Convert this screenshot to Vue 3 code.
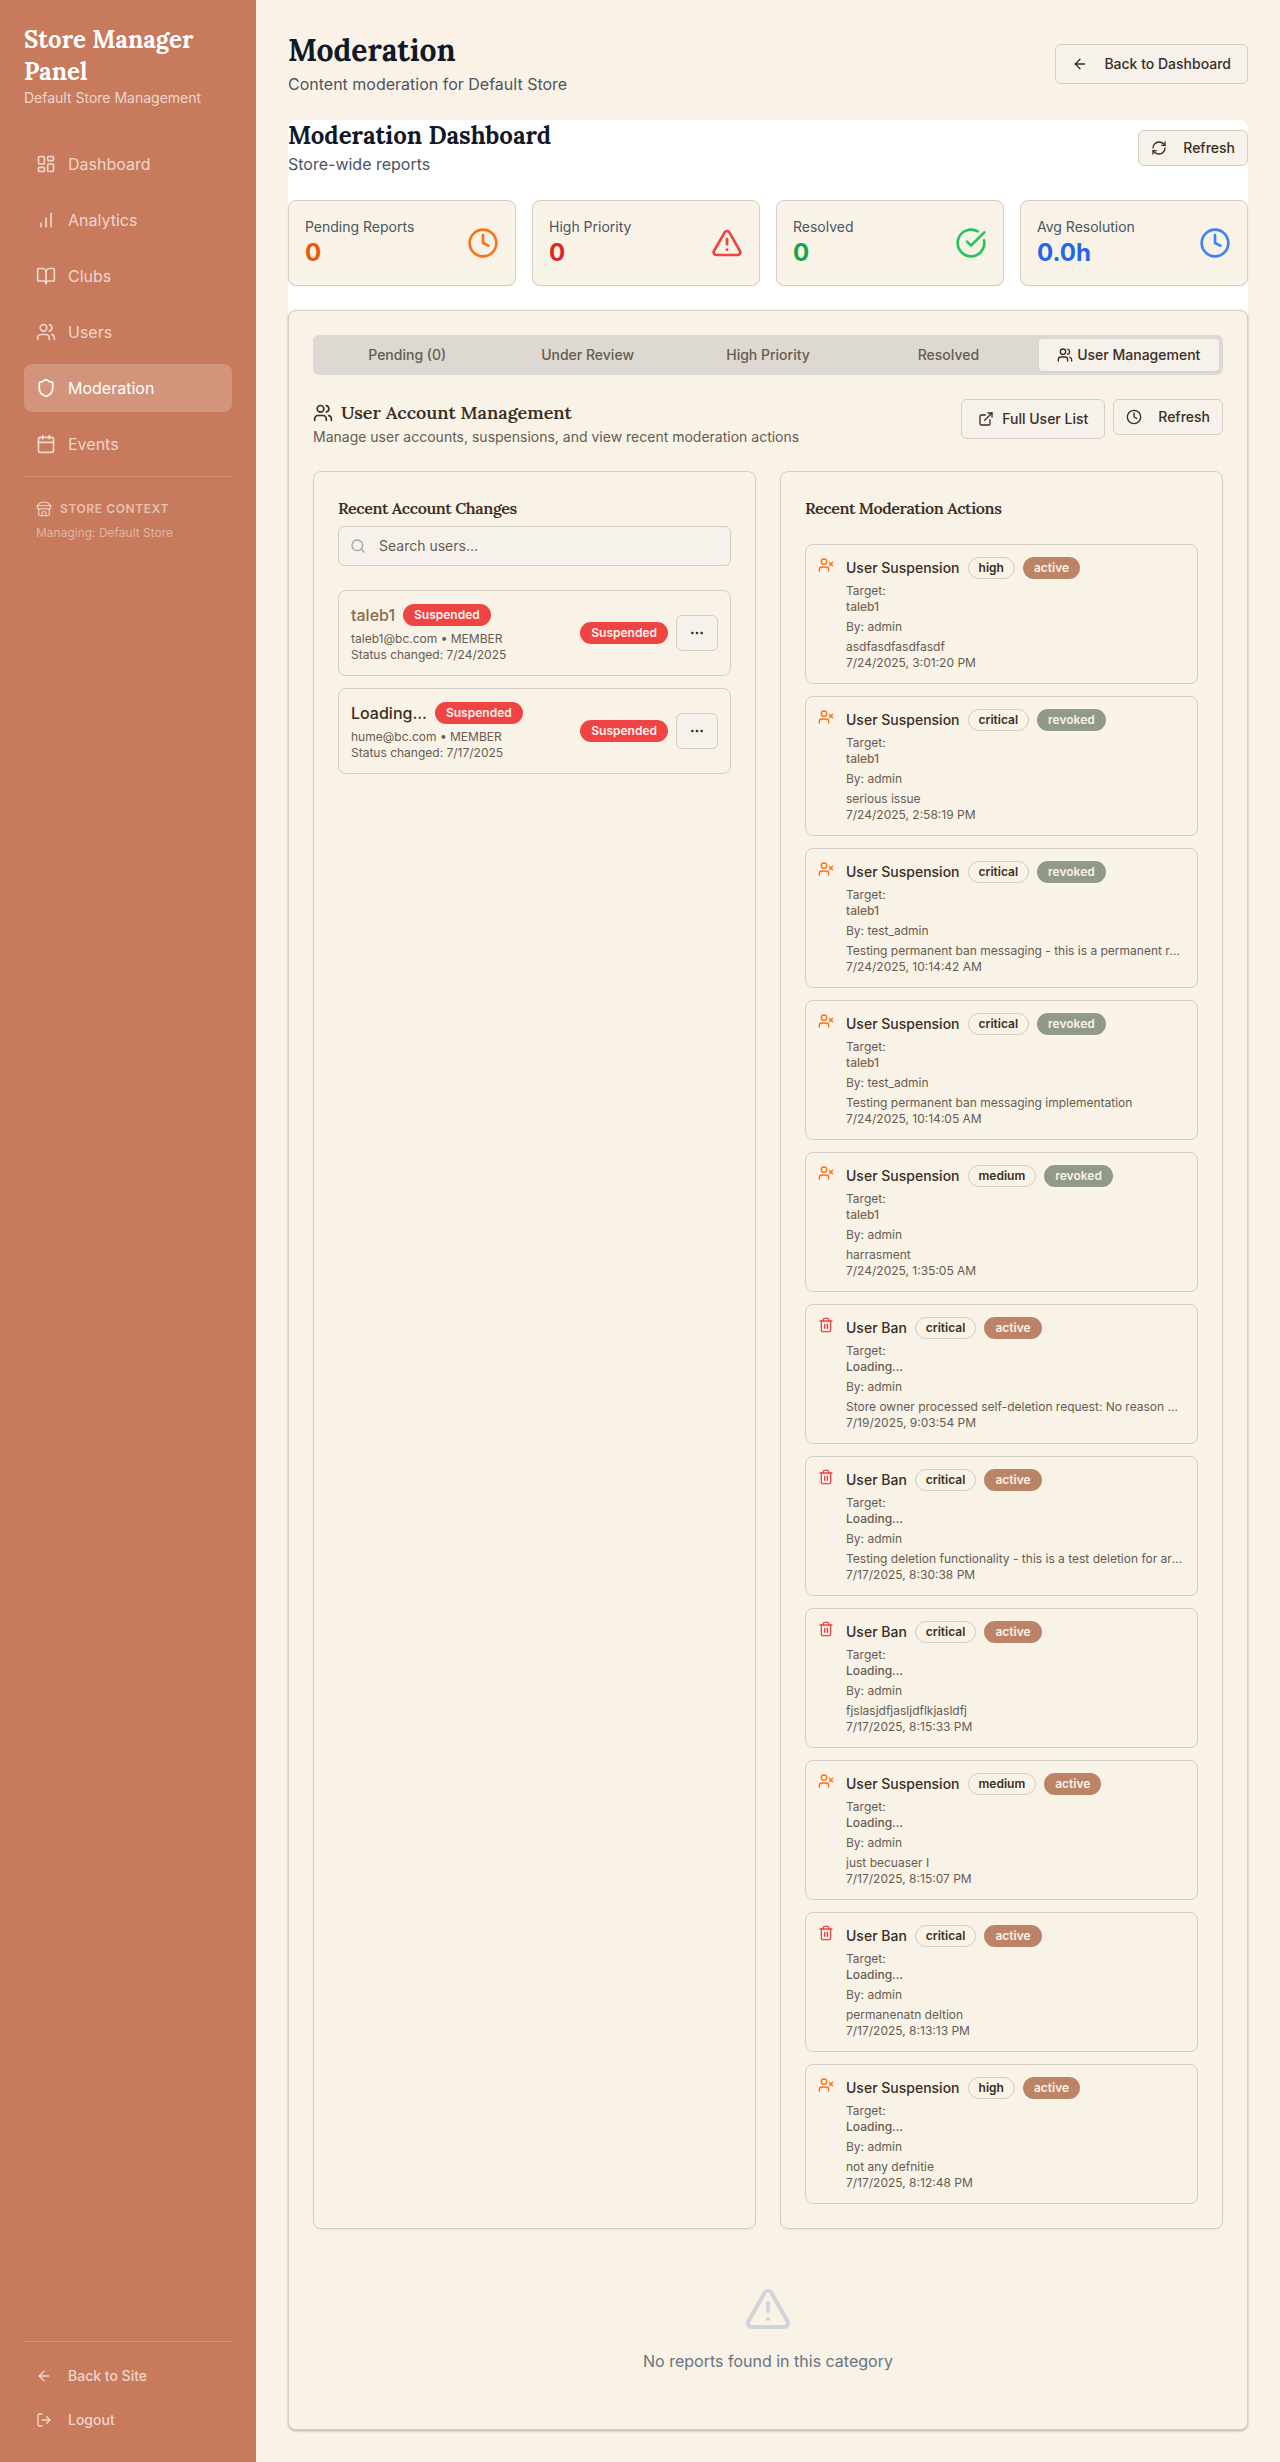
<script setup>
import { h } from 'vue'

const icons = {
  dashboard: '<rect width="7" height="9" x="3" y="3" rx="1"/><rect width="7" height="5" x="14" y="3" rx="1"/><rect width="7" height="9" x="14" y="12" rx="1"/><rect width="7" height="5" x="3" y="16" rx="1"/>',
  bars: '<path d="M12 20V10"/><path d="M18 20V4"/><path d="M6 20v-4"/>',
  book: '<path d="M12 7v14"/><path d="M3 18a1 1 0 0 1-1-1V4a1 1 0 0 1 1-1h5a4 4 0 0 1 4 4 4 4 0 0 1 4-4h5a1 1 0 0 1 1 1v13a1 1 0 0 1-1 1h-6a3 3 0 0 0-3 3 3 3 0 0 0-3-3z"/>',
  users: '<path d="M16 21v-2a4 4 0 0 0-4-4H6a4 4 0 0 0-4 4v2"/><circle cx="9" cy="7" r="4"/><path d="M22 21v-2a4 4 0 0 0-3-3.87"/><path d="M16 3.13a4 4 0 0 1 0 7.75"/>',
  shield: '<path d="M20 13c0 5-3.5 7.5-7.66 8.95a1 1 0 0 1-.67-.01C7.5 20.5 4 18 4 13V6a1 1 0 0 1 1-1c2 0 4.5-1.2 6.24-2.72a1.17 1.17 0 0 1 1.52 0C14.51 3.81 17 5 19 5a1 1 0 0 1 1 1z"/>',
  calendar: '<path d="M8 2v4"/><path d="M16 2v4"/><rect width="18" height="18" x="3" y="4" rx="2"/><path d="M3 10h18"/>',
  store: '<path d="m2 7 4.41-4.41A2 2 0 0 1 7.83 2h8.34a2 2 0 0 1 1.42.59L22 7"/><path d="M4 12v8a2 2 0 0 0 2 2h12a2 2 0 0 0 2-2v-8"/><path d="M15 22v-4a2 2 0 0 0-2-2h-2a2 2 0 0 0-2 2v4"/><path d="M2 7h20"/><path d="M22 7v3a2 2 0 0 1-2 2a2.7 2.7 0 0 1-1.59-.63.7.7 0 0 0-.82 0A2.7 2.7 0 0 1 16 12a2.7 2.7 0 0 1-1.59-.63.7.7 0 0 0-.82 0A2.7 2.7 0 0 1 12 12a2.7 2.7 0 0 1-1.59-.63.7.7 0 0 0-.82 0A2.7 2.7 0 0 1 8 12a2.7 2.7 0 0 1-1.59-.63.7.7 0 0 0-.82 0A2.7 2.7 0 0 1 4 12a2 2 0 0 1-2-2V7"/>',
  back: '<path d="m12 19-7-7 7-7"/><path d="M19 12H5"/>',
  logout: '<path d="M9 21H5a2 2 0 0 1-2-2V5a2 2 0 0 1 2-2h4"/><path d="m16 17 5-5-5-5"/><path d="M21 12H9"/>',
  refresh: '<path d="M3 12a9 9 0 0 1 9-9 9.75 9.75 0 0 1 6.74 2.74L21 8"/><path d="M21 3v5h-5"/><path d="M21 12a9 9 0 0 1-9 9 9.75 9.75 0 0 1-6.74-2.74L3 16"/><path d="M8 16H3v5"/>',
  clock: '<circle cx="12" cy="12" r="10"/><path d="M12 6v6l4 2"/>',
  alert: '<path d="m21.73 18-8-14a2 2 0 0 0-3.48 0l-8 14A2 2 0 0 0 4 21h16a2 2 0 0 0 1.73-3"/><path d="M12 9v4"/><path d="M12 17h.01"/>',
  check: '<path d="M21.801 10A10 10 0 1 1 17 3.335"/><path d="m9 11 3 3L22 4"/>',
  external: '<path d="M15 3h6v6"/><path d="M10 14 21 3"/><path d="M18 13v6a2 2 0 0 1-2 2H5a2 2 0 0 1-2-2V8a2 2 0 0 1 2-2h6"/>',
  search: '<circle cx="11" cy="11" r="8"/><path d="m21 21-4.3-4.3"/>',
  more: '<circle cx="12" cy="12" r="1"/><circle cx="19" cy="12" r="1"/><circle cx="5" cy="12" r="1"/>',
  userx: '<path d="M16 21v-2a4 4 0 0 0-4-4H6a4 4 0 0 0-4 4v2"/><circle cx="9" cy="7" r="4"/><path d="m17 8 5 5"/><path d="m22 8-5 5"/>',
  trash: '<path d="M3 6h18"/><path d="M19 6v14c0 1-1 2-2 2H7c-1 0-2-1-2-2V6"/><path d="M8 6V4c0-1 1-2 2-2h4c1 0 2 1 2 2v2"/><path d="M10 11v6"/><path d="M14 11v6"/>',
}

const Icon = ({ name, size = 16 }) =>
  h('svg', {
    width: size, height: size, viewBox: '0 0 24 24', fill: 'none', stroke: 'currentColor',
    'stroke-width': 2, 'stroke-linecap': 'round', 'stroke-linejoin': 'round',
    style: { display: 'block', flexShrink: 0 }, innerHTML: icons[name],
  })
Icon.props = ['name', 'size']

const nav = [
  { label: 'Dashboard', icon: 'dashboard' },
  { label: 'Analytics', icon: 'bars' },
  { label: 'Clubs', icon: 'book' },
  { label: 'Users', icon: 'users' },
  { label: 'Moderation', icon: 'shield', active: true },
  { label: 'Events', icon: 'calendar' },
]

const stats = [
  { label: 'Pending Reports', value: '0', icon: 'clock', tone: 'orange' },
  { label: 'High Priority', value: '0', icon: 'alert', tone: 'red' },
  { label: 'Resolved', value: '0', icon: 'check', tone: 'green' },
  { label: 'Avg Resolution', value: '0.0h', icon: 'clock', tone: 'blue' },
]

const tabs = ['Pending (0)', 'Under Review', 'High Priority', 'Resolved']

const accounts = [
  { name: 'taleb1', email: 'taleb1@bc.com', date: '7/24/2025', known: true },
  { name: 'Loading...', email: 'hume@bc.com', date: '7/17/2025', known: false },
]

const action = (kind, level, state, target, by, reason, time) => ({ kind, level, state, target, by, reason, time })
const actions = [
  action('Suspension', 'high', 'active', 'taleb1', 'admin', 'asdfasdfasdfasdf', '7/24/2025, 3:01:20 PM'),
  action('Suspension', 'critical', 'revoked', 'taleb1', 'admin', 'serious issue', '7/24/2025, 2:58:19 PM'),
  action('Suspension', 'critical', 'revoked', 'taleb1', 'test_admin', 'Testing permanent ban messaging - this is a permanent restriction', '7/24/2025, 10:14:42 AM'),
  action('Suspension', 'critical', 'revoked', 'taleb1', 'test_admin', 'Testing permanent ban messaging implementation', '7/24/2025, 10:14:05 AM'),
  action('Suspension', 'medium', 'revoked', 'taleb1', 'admin', 'harrasment', '7/24/2025, 1:35:05 AM'),
  action('Ban', 'critical', 'active', 'Loading...', 'admin', 'Store owner processed self-deletion request: No reason provided', '7/19/2025, 9:03:54 PM'),
  action('Ban', 'critical', 'active', 'Loading...', 'admin', 'Testing deletion functionality - this is a test deletion for archival', '7/17/2025, 8:30:38 PM'),
  action('Ban', 'critical', 'active', 'Loading...', 'admin', 'fjslasjdfjasljdflkjasldfj', '7/17/2025, 8:15:33 PM'),
  action('Suspension', 'medium', 'active', 'Loading...', 'admin', 'just becuaser I', '7/17/2025, 8:15:07 PM'),
  action('Ban', 'critical', 'active', 'Loading...', 'admin', 'permanenatn deltion', '7/17/2025, 8:13:13 PM'),
  action('Suspension', 'high', 'active', 'Loading...', 'admin', 'not any defnitie', '7/17/2025, 8:12:48 PM'),
]
</script>

<template>
  <div class="layout">
    <aside class="sidebar">
      <h2 class="brand">Store Manager Panel</h2>
      <p class="brand-sub">Default Store Management</p>
      <nav class="nav">
        <a v-for="n in nav" :key="n.label" class="nav-item" :class="{ on: n.active }">
          <Icon :name="n.icon" :size="20" />{{ n.label }}
        </a>
      </nav>
      <div class="context">
        <div class="context-title"><Icon name="store" />STORE CONTEXT</div>
        <div class="context-sub">Managing: Default Store</div>
      </div>
      <div class="side-foot">
        <a class="foot-item"><Icon name="back" />Back to Site</a>
        <a class="foot-item"><Icon name="logout" />Logout</a>
      </div>
    </aside>

    <main class="main">
      <header class="page-head">
        <div>
          <h1 class="page-title">Moderation</h1>
          <p class="page-sub">Content moderation for Default Store</p>
        </div>
        <button class="btn wide"><Icon name="back" />Back to Dashboard</button>
      </header>

      <section class="panel">
        <div class="panel-head">
          <div>
            <h2 class="panel-title">Moderation Dashboard</h2>
            <p class="panel-sub">Store-wide reports</p>
          </div>
          <button class="btn small"><Icon name="refresh" />Refresh</button>
        </div>

        <div class="stats">
          <div v-for="s in stats" :key="s.label" class="stat" :class="s.tone">
            <div>
              <div class="stat-label">{{ s.label }}</div>
              <div class="stat-value">{{ s.value }}</div>
            </div>
            <Icon class="stat-icon" :name="s.icon" :size="32" />
          </div>
        </div>

        <div class="board">
          <div class="tabs">
            <div v-for="t in tabs" :key="t" class="tab">{{ t }}</div>
            <div class="tab on"><Icon name="users" />User Management</div>
          </div>

          <div class="section-head">
            <div>
              <h3 class="section-title"><Icon name="users" :size="20" /><span>User Account Management</span></h3>
              <p class="section-sub">Manage user accounts, suspensions, and view recent moderation actions</p>
            </div>
            <div class="buttons">
              <button class="btn list"><Icon name="external" />Full User List</button>
              <button class="btn small"><Icon name="clock" />Refresh</button>
            </div>
          </div>

          <div class="columns">
            <div class="card">
              <h4 class="card-title">Recent Account Changes</h4>
              <div class="search"><Icon name="search" />Search users...</div>
              <div class="stack">
                <div v-for="a in accounts" :key="a.email" class="item account">
                  <div>
                    <div class="account-top">
                      <span class="account-name" :class="{ known: a.known }">{{ a.name }}</span>
                      <span class="badge danger">Suspended</span>
                    </div>
                    <div class="line">{{ a.email }} • MEMBER</div>
                    <div class="line">Status changed: {{ a.date }}</div>
                  </div>
                  <div class="account-right">
                    <span class="badge danger">Suspended</span>
                    <button class="btn dots"><Icon name="more" /></button>
                  </div>
                </div>
              </div>
            </div>

            <div class="card">
              <h4 class="card-title">Recent Moderation Actions</h4>
              <div class="stack actions">
                <div v-for="a in actions" :key="a.time" class="item action">
                  <Icon :name="a.kind === 'Ban' ? 'trash' : 'userx'" :class="a.kind === 'Ban' ? 'ban' : 'susp'" />
                  <div class="action-body">
                    <div class="action-top">
                      <span class="action-name">User {{ a.kind }}</span>
                      <span class="badge outline">{{ a.level }}</span>
                      <span class="badge" :class="a.state">{{ a.state }}</span>
                    </div>
                    <div class="line">Target:</div>
                    <div class="line target" :class="{ known: a.target === 'taleb1' }">{{ a.target }}</div>
                    <div class="line by">By: {{ a.by }}</div>
                    <div class="line reason">{{ a.reason }}</div>
                    <div class="line">{{ a.time }}</div>
                  </div>
                </div>
              </div>
            </div>
          </div>

          <div class="empty">
            <Icon name="alert" :size="48" class="empty-icon" />
            <p>No reports found in this category</p>
          </div>
        </div>
      </section>
    </main>
  </div>
</template>

<style>
body { margin: 0; background: #faf2e6; }
</style>

<style scoped>
* { box-sizing: border-box; }
h1, h2, h3, h4, p { margin: 0; }
.layout {
  display: flex;
  min-height: 2462px;
  font-family: Inter, "Liberation Sans", sans-serif;
  font-size: 16px;
  line-height: 24px;
  color: #3a2e24;
  background: #faf2e6;
}
h1, h2, h3, h4 { font-family: Lora, "Liberation Serif", serif; white-space: nowrap; }

.sidebar {
  width: 256px;
  flex-shrink: 0;
  padding: 24px;
  background: #c87a5c;
  color: rgba(255, 255, 255, 0.7);
  display: flex;
  flex-direction: column;
}
.brand { font-size: 24px; line-height: 32px; font-weight: 700; color: #fff; white-space: normal; }
.brand-sub { font-size: 14px; line-height: 20px; white-space: nowrap; }
.nav { margin-top: 32px; display: flex; flex-direction: column; gap: 8px; }
.nav-item { height: 48px; padding: 0 12px; display: flex; align-items: center; gap: 12px; border-radius: 8px; }
.nav-item.on { background: rgba(255, 255, 255, 0.2); color: #fff; }
.context { margin-top: 8px; border-top: 1px solid rgba(255, 255, 255, 0.2); padding: 24px 12px 0; }
.context-title { display: flex; align-items: center; gap: 8px; font-size: 12px; line-height: 16px; font-weight: 600; letter-spacing: 0.6px; color: rgba(255, 255, 255, 0.55); }
.context-sub { margin-top: 8px; font-size: 12px; line-height: 16px; color: rgba(255, 255, 255, 0.45); }
.side-foot { margin-top: auto; border-top: 1px solid rgba(255, 255, 255, 0.2); padding-top: 16px; display: flex; flex-direction: column; gap: 8px; }
.foot-item { height: 36px; padding: 0 12px; display: flex; align-items: center; gap: 16px; font-size: 14px; font-weight: 500; }

.main { flex: 1; min-width: 0; padding: 32px; display: flex; flex-direction: column; }
.page-head { display: flex; justify-content: space-between; align-items: center; margin-bottom: 24px; }
.page-title { font-size: 30px; line-height: 36px; font-weight: 700; color: #111827; }
.page-sub { margin-top: 4px; color: #4b5563; }

.btn {
  display: flex;
  align-items: center;
  justify-content: center;
  height: 40px;
  padding: 0 16px;
  gap: 16px;
  border: 1px solid #d5ccc2;
  border-radius: 6px;
  background: #f6f1ea;
  color: #3a2e24;
  font: 500 14px/20px Inter, "Liberation Sans", sans-serif;
  white-space: nowrap;
}
.btn.small { height: 36px; padding: 0 12px; }
.btn.list { gap: 8px; }
.btn.dots { width: 42px; height: 36px; padding: 0; }

.panel { background: #fff; border-radius: 8px; box-shadow: 0 1px 2px rgba(0, 0, 0, 0.05); }
.panel-head { display: flex; justify-content: space-between; align-items: center; }
.panel-title { font-size: 24px; line-height: 32px; font-weight: 700; color: #111827; }
.panel-sub { color: #4b5563; }

.stats { display: grid; grid-template-columns: repeat(4, 1fr); gap: 16px; margin: 24px 0; }
.stat {
  display: flex;
  justify-content: space-between;
  align-items: center;
  padding: 16px;
  border: 1px solid #d5ccc2;
  border-radius: 8px;
  background: #f9f2e6;
  box-shadow: 0 1px 2px rgba(0, 0, 0, 0.05);
}
.stat-label { font-size: 14px; line-height: 20px; color: #4b5563; }
.stat-value { font-size: 24px; line-height: 32px; font-weight: 700; }
.orange .stat-value { color: #ea580c; }
.orange .stat-icon { color: #f97316; }
.red .stat-value { color: #dc2626; }
.red .stat-icon { color: #ef4444; }
.green .stat-value { color: #16a34a; }
.green .stat-icon { color: #22c55e; }
.blue .stat-value { color: #2563eb; }
.blue .stat-icon { color: #3b82f6; }

.board {
  border: 1px solid #d5ccc2;
  border-radius: 8px;
  background: #f9f2e6;
  padding: 24px;
  box-shadow: 0 1px 3px rgba(60, 46, 30, 0.2), 0 1px 2px rgba(60, 46, 30, 0.1);
}
.tabs { display: grid; grid-template-columns: repeat(5, 1fr); height: 40px; padding: 4px; border-radius: 6px; background: #ddd8d1; }
.tab { display: flex; align-items: center; justify-content: center; gap: 4px; font-size: 14px; font-weight: 500; color: #665c52; border-radius: 4px; white-space: nowrap; }
.tab.on { background: #f6f1ea; color: #3a2e24; box-shadow: 0 1px 2px rgba(0, 0, 0, 0.05); }

.section-head { margin-top: 24px; display: flex; justify-content: space-between; align-items: flex-start; }
.section-title { display: flex; align-items: center; gap: 8px; font-size: 18px; line-height: 28px; font-weight: 600; }
.section-sub { font-size: 14px; line-height: 20px; color: #665c52; }
.buttons { display: flex; align-items: flex-start; gap: 8px; }

.columns { margin-top: 24px; display: grid; grid-template-columns: repeat(2, minmax(0, 1fr)); gap: 24px; }
.card { border: 1px solid #d5ccc2; border-radius: 8px; padding: 24px; box-shadow: 0 1px 2px rgba(0, 0, 0, 0.05); }
.card-title { font-size: 16px; line-height: 24px; font-weight: 600; letter-spacing: -0.025em; }
.search {
  margin-top: 6px;
  height: 40px;
  padding: 0 12px;
  display: flex;
  align-items: center;
  gap: 12px;
  border: 1px solid #d5ccc2;
  border-radius: 6px;
  background: #f6f1ea;
  font-size: 14px;
  color: #665c52;
}
.search svg { color: #9ca3af; position: relative; left: -1px; }
.stack { margin-top: 24px; display: flex; flex-direction: column; gap: 12px; }
.item { border: 1px solid #d5ccc2; border-radius: 8px; padding: 12px; display: flex; }
.account { justify-content: space-between; align-items: center; }
.account-top { display: flex; align-items: center; gap: 8px; margin-bottom: 4px; }
.account-name { font-weight: 500; }
.account-name.known { color: #8b6b4a; }
.account-right { display: flex; align-items: center; gap: 8px; }
.line { font-size: 12px; line-height: 16px; color: #665c52; }

.badge { display: block; height: 22px; padding: 2px 10px; border: 1px solid transparent; border-radius: 11px; font-size: 12px; line-height: 16px; font-weight: 600; }
.danger { background: #ef4444; color: #fdf3ec; }
.outline { border-color: #d5ccc2; color: #3a2e24; }
.active { background: #bc8466; color: #f9f2e6; }
.revoked { background: #919988; color: #f9f2e6; }

.action { gap: 12px; }
.action-body { flex: 1; min-width: 0; }
.action-top { display: flex; align-items: center; gap: 8px; margin-bottom: 4px; }
.action-name { font-size: 14px; line-height: 20px; font-weight: 500; }
.target { font-weight: 500; }
.target.known { color: #80654a; }
.by { margin: 4px 0; }
.reason { overflow: hidden; text-overflow: ellipsis; white-space: nowrap; }
.susp { color: #f97316; }
.ban { color: #ef4444; }

.empty { margin-top: 24px; padding: 32px 0; display: flex; flex-direction: column; align-items: center; gap: 16px; color: #6b7280; }
.empty-icon { color: #d1d5db; }
</style>
